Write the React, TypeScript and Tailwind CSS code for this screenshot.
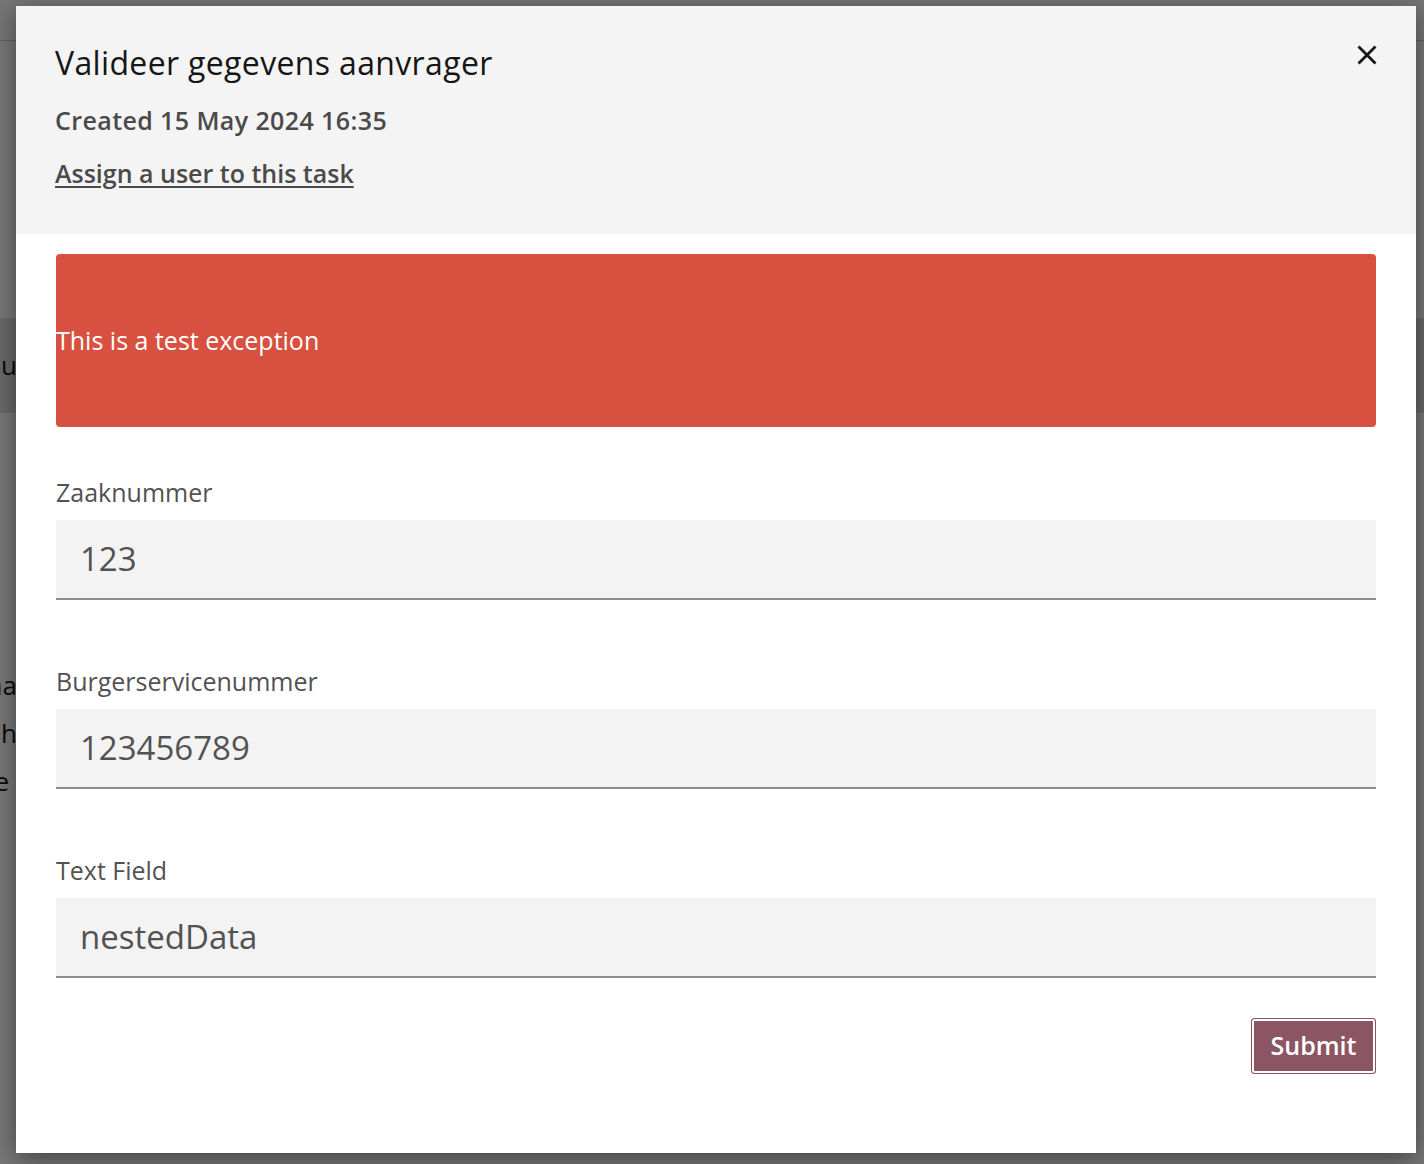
import React from "react";

const font = { fontFamily: "'Open Sans', 'Noto Sans', sans-serif" };

function Field({ label, value }: { label: string; value: string }) {
  return (
    <div className="flex flex-col gap-[12px]">
      <label className="text-[25px] leading-[32px] text-[#525252]">{label}</label>
      <div className="h-[80px] bg-[#f3f3f3] border-b-2 border-[#8d8d8d] flex items-center px-[24px]">
        <span className="text-[33px] text-[#525252]">{value}</span>
      </div>
    </div>
  );
}

export default function App() {
  return (
    <div className="relative w-[1424px] h-[1164px] overflow-hidden bg-white" style={font}>
      {/* pagina achter de modal */}
      <div className="flex flex-col h-full">
        <div className="h-[41px] border-b border-[#d0d0d0] bg-[#fafafa]" />
        <div className="h-[277px]" />
        <div className="h-[95px] bg-[#e0e0e0] flex items-center">
          <div className="w-[17px] flex justify-end">
            <span className="whitespace-nowrap text-[26px] text-[#161616]">Zaaknu</span>
          </div>
        </div>
        <div className="flex flex-col pt-[248px] text-[26px] leading-[48px] text-[#161616]">
          <div className="w-[17px] flex justify-end">
            <span className="whitespace-nowrap">Naa</span>
          </div>
          <div className="w-[17px] flex justify-end">
            <span className="whitespace-nowrap">h</span>
          </div>
          <div className="w-[9px] flex justify-end">
            <span className="whitespace-nowrap">e</span>
          </div>
        </div>
      </div>

      {/* overlay + modal */}
      <div className="absolute inset-0 bg-[rgba(0,0,0,0.53)] pt-[6px] pl-[16px]">
        <div className="w-[1400px] h-[1147px] bg-white shadow-[0_6px_24px_rgba(0,0,0,0.45)] flex flex-col">
          <div className="relative bg-[#f4f4f4] px-[39px] pt-[37px] pb-[45px] flex flex-col gap-[21px]">
            <h1 className="text-[32px] leading-[40px] tracking-[0.35px] text-[#161616] font-normal">
              Valideer gegevens aanvrager
            </h1>
            <div className="text-[25px] leading-[32px] font-semibold tracking-[0.4px] text-[#4a4a4a]">
              Created 15 May 2024 16:35
            </div>
            <a className="text-[25px] leading-[32px] font-semibold text-[#4a4a4a] underline underline-offset-[3px] self-start">
              Assign a user to this task
            </a>
            <button className="absolute right-[39px] top-[39px] w-[20px] h-[20px] text-[#161616]">
              <svg viewBox="0 0 20 20" className="w-[20px] h-[20px]" fill="none" stroke="currentColor" strokeWidth="2.8">
                <path d="M1.5 1.5 L18.5 18.5 M18.5 1.5 L1.5 18.5" />
              </svg>
            </button>
          </div>

          <div className="px-[40px] pt-[20px] flex flex-col">
            <div className="h-[173px] bg-[#d8503f] rounded-[4px] flex items-center">
              <span className="text-[25px] text-white">This is a test exception</span>
            </div>

            <div className="flex flex-col gap-[65px] pt-[49px]">
              <Field label="Zaaknummer" value="123" />
              <Field label="Burgerservicenummer" value="123456789" />
              <Field label="Text Field" value="nestedData" />
            </div>

            <div className="flex justify-end pt-[40px]">
              <button className="h-[56px] w-[125px] rounded-[3px] border border-[#8b5563] bg-[#8b5563] shadow-[inset_0_0_0_2px_white] text-white text-[25px] font-semibold">
                Submit
              </button>
            </div>
          </div>
        </div>
      </div>
    </div>
  );
}
